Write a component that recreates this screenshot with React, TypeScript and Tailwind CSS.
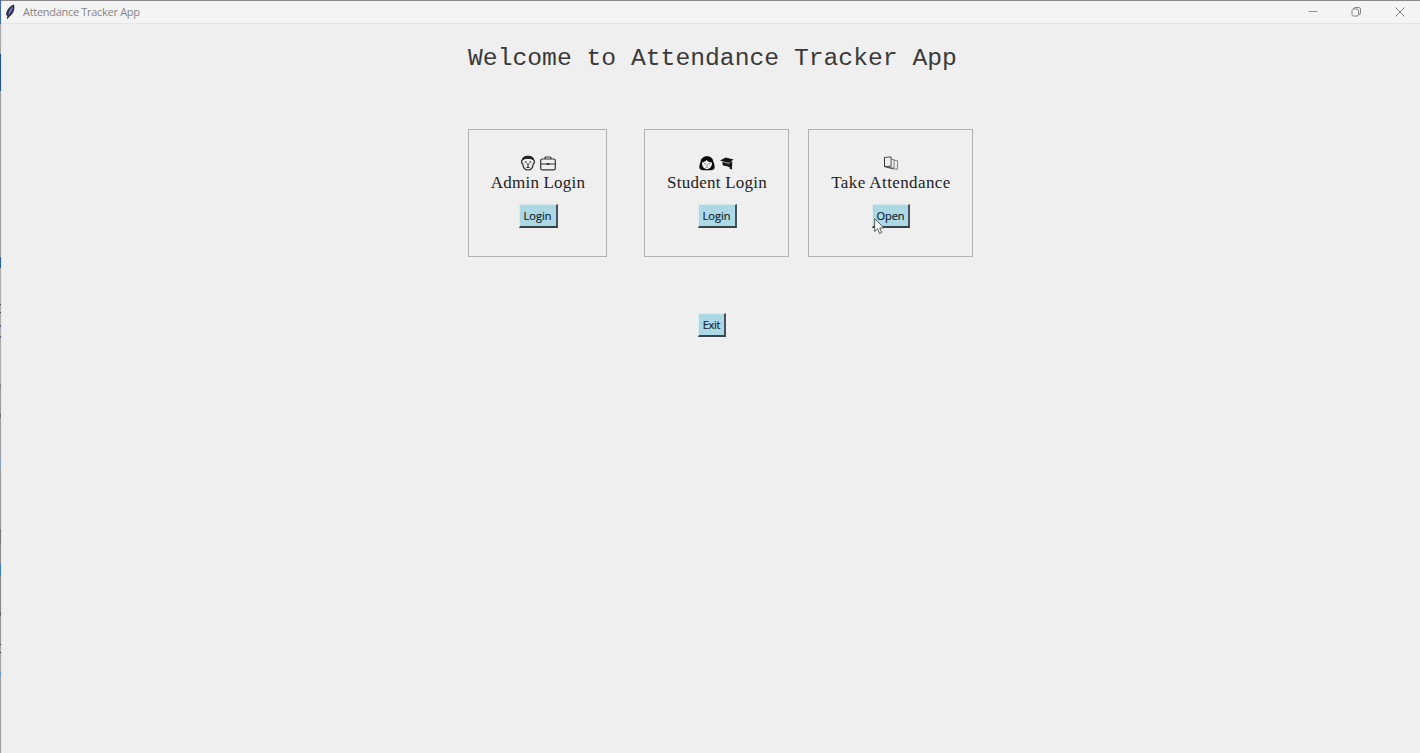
import type { ReactNode } from "react";

const edge = [
  "h-[24px] bg-[#3f66b0]",
  "h-[30px] bg-[#aaaaac]",
  "h-[37px] bg-[#1f5596]",
  "h-[166px] bg-[#a3a3a5]",
  "h-[11px] bg-[#2161a5]",
  "h-[36px] bg-[#adadad]",
  "h-px bg-[#444444]",
  "h-[7px] bg-[#adadad]",
  "h-px bg-[#444444]",
  "h-[12px] bg-[#adadad]",
  "h-[2px] bg-[#5a6478]",
  "h-[9px] bg-[#adadad]",
  "h-[2px] bg-[#5a6478]",
  "h-[46px] bg-[#adadad]",
  "h-[5px] bg-[#888888]",
  "h-[25px] bg-[#9f9fa1]",
  "h-[4px] bg-[#777777]",
  "h-[38px] bg-[#9fa1a5]",
  "h-[13px] bg-[#8ba1b5]",
  "h-[60px] bg-[#9a9a9b]",
  "h-[15px] bg-[#777777]",
  "h-[20px] bg-[#8d8d8e]",
  "h-[12px] bg-[#3b82c9]",
  "h-[36px] bg-[#8b8b8b]",
  "h-[4px] bg-[#666666]",
  "h-[28px] bg-[#999999]",
  "h-px bg-[#444444]",
  "h-[7px] bg-[#a5a5a5]",
  "h-px bg-[#333333]",
  "h-[19px] bg-[#a5a5a5]",
  "h-[4px] bg-[#5b9bc8]",
  "flex-1 bg-[#a0a0a2]",
];

function TkButton({ children, className }: { children: ReactNode; className: string }) {
  return (
    <button
      className={`flex h-[24px] items-center justify-center border-r-2 border-b-2 border-t border-l border-t-[#dcebf0] border-l-[#dcebf0] border-r-[#46535a] border-b-[#36434a] bg-[#add8e6] pb-px font-['Open_Sans','Noto_Sans',sans-serif] text-[11px] leading-none text-[#14242c] [-webkit-text-stroke:0.2px_#14242c] ${className}`}
    >
      {children}
    </button>
  );
}

function Card({ icons, label, children, className, labelClass }: { icons: ReactNode; label: string; children: ReactNode; className: string; labelClass: string }) {
  return (
    <section className={`flex h-[128px] flex-col items-center border border-[#b2b2b2] pt-[25px] ${className}`}>
      <div className="flex h-4 gap-1">{icons}</div>
      <h2 className={`mt-[2px] h-5 whitespace-nowrap pl-px font-['Liberation_Serif',serif] text-[17px] leading-5 text-[#222222] ${labelClass}`}>{label}</h2>
      <div className="mt-[11px] flex pl-px">{children}</div>
    </section>
  );
}

function ManIcon() {
  return (
    <svg className="size-4" viewBox="0 0 16 16" fill="none" stroke="#2a2a2a">
      <path d="M2.300 5C2.300 2.500 5 1.800 8 1.800s5.700.7 5.700 3.200c1.200 1.200 1 3.200-.4 3.900C12.900 12.500 10.700 15 8 15s-4.900-2.500-5.300-6.100C1.300 8.200 1.100 6.200 2.300 5Z" strokeWidth="1.200" />
      <path d="M2.500 5c0-2.700 2.500-3.800 5.500-3.800S13.500 2.300 13.500 5L12 4C10 3.200 6 3.200 4 4Z" fill="#1b1b1b" />
      <path d="M4.700 7h1.800M9.500 7h1.800M6.500 8.300 8 9.500l1.500-1.200M8 9.500V12M6.500 12.500h3" />
    </svg>
  );
}

function BriefcaseIcon() {
  return (
    <svg className="size-4" viewBox="0 0 16 16" fill="none" stroke="#333333" strokeWidth="1.200">
      <rect x=".7" y="4" width="14.600" height="10.800" rx="1.600" />
      <path d="M5 4V3q0-1 1-1h4q1 0 1 1v1M.7 9h14.600" />
      <path d="M6.500 9h3" strokeWidth="1.800" />
    </svg>
  );
}

function WomanIcon() {
  return (
    <svg className="size-4" viewBox="0 0 16 16">
      <path d="M8 1.200c4 0 6.200 2.600 6.500 5.800.8 2 1.300 4.100 1.100 5.600-.2 1.900-1.500 2.600-3.600 2.600H4C1.900 15.200.6 14.500.4 12.600.2 11.100.7 9 1.500 7 1.800 3.800 4 1.200 8 1.200Z" fill="#0b0b0b" />
      <path d="M3 7.500c1.900-.3 3.600-1.200 4.400-2.500C8.800 6.400 10.600 7.300 13 7.500c.2 3.900-2 6.500-5 6.500S2.800 11.400 3 7.500Z" fill="#eeeeee" />
      <path d="M4.800 8.600h1.700M9.500 8.600h1.700M6.500 9.300l1.500 1.200 1.500-1.200M6.700 12.200h2.600" fill="none" stroke="#777777" strokeWidth=".8" />
    </svg>
  );
}

function CapIcon() {
  return (
    <svg className="size-4" viewBox="0 0 16 16" fill="#151515">
      <path d="M1 5.500 6.800 2.400 14.600 4.600 9.600 8Z" />
      <path d="m3.300 6.800 6.300 2 3.600-2.500v4.500l-2.700 1.700C8 11 6 10.700 3.900 10.500Z" />
      <path d="m7.500 5 4.700 2.200v6" fill="none" stroke="#151515" strokeWidth="1.200" />
      <path d="m11.200 11 1.800.3v3.200l-2.300-.7Z" />
    </svg>
  );
}

function PagesIcon() {
  return (
    <svg className="size-4" viewBox="0 0 16 16" fill="#efefef" stroke="#777777" strokeWidth=".9">
      <path d="m9 5 5.500.7v8.500L9 13.600Z" />
      <path d="m5.500 4 5.600.6v8.700L5.500 12Z" />
      <path d="m1.500 2.500 6.600-.6v9.300l-6.600.3Z" stroke="#3f3f3f" />
      <path d="M1.500 2.500v9.200l8.300 2" fill="none" stroke="#333333" />
    </svg>
  );
}

export default function App() {
  return (
    <div className="flex h-[753px] w-[1420px] overflow-hidden bg-[#efefef]">
      <div className="flex w-px shrink-0 flex-col">
        {edge.map((segment, index) => (
          <div key={index} className={segment} />
        ))}
      </div>
      <div className="flex flex-1 flex-col">
        <header className="flex h-[23px] shrink-0 items-center justify-between border-t border-[#8b898b] bg-[#f4f4f5]">
          <div className="flex items-center">
            <svg className="ml-[3px] h-[16px] w-[12px]" viewBox="0 0 12 16">
              <path d="M10 .5c.8 3 .4 6.500-1.800 9.500L5 13.200 3.600 15l-.8-.4.6-2.400L2 10.500C2.500 6 6 1.500 10 .5Z" fill="#303047" />
              <path d="M8.600 2.300C6.300 4.600 4.600 8 4.200 11.200l1.500-1.500C7.700 7.500 8.800 5 8.600 2.300Z" fill="#777fc9" />
            </svg>
            <h1 className="ml-[7px] whitespace-nowrap font-['Open_Sans','Noto_Sans',sans-serif] text-[11px] leading-5 tracking-[-0.3px] text-[#858585]">Attendance Tracker App</h1>
          </div>
          <div className="mr-[14px] flex items-center gap-[32px]">
            <svg className="-mr-[1px] size-3" viewBox="0 0 12 12" fill="none" stroke="#929292">
              <path d="M1.500 5.500h9" />
            </svg>
            <svg className="size-3" viewBox="0 0 12 12" fill="none" stroke="#858585">
              <rect x="2" y="3" width="6.500" height="7" rx="1.500" />
              <path d="M4 3V2.500q0-1 1-1h3.500q2 0 2 1.500v4q0 1.500-1.500 1.500" />
            </svg>
            <svg className="size-3" viewBox="0 0 12 12" fill="none" stroke="#858585">
              <path d="m1.500 1.500 9 9M10.500 1.500l-9 9" />
            </svg>
          </div>
        </header>
        <main className="flex flex-1 flex-col border-t border-l border-[#e7e5e8] pl-[466px]">
          <p className="mt-[18px] h-8 whitespace-nowrap font-['Liberation_Mono',monospace] text-[24.700px] leading-8 text-[#3a3a3a]">Welcome to Attendance Tracker App</p>
          <div className="mt-[55px] flex">
            <Card className="w-[139px]" label="Admin Login" labelClass="tracking-[0.2px]" icons={<><ManIcon /><BriefcaseIcon /></>}>
              <TkButton className="w-[39px]">Login</TkButton>
            </Card>
            <Card className="ml-[37px] w-[145px]" label="Student Login" labelClass="tracking-[0.25px]" icons={<><WomanIcon /><CapIcon /></>}>
              <TkButton className="w-[39px]">Login</TkButton>
            </Card>
            <Card className="ml-[19px] w-[165px]" label="Take Attendance" labelClass="tracking-[0.4px]" icons={<PagesIcon />}>
              <div className="relative">
                <TkButton className="w-[38px]">Open</TkButton>
                <svg className="absolute left-[2px] top-[14px] h-[17px] w-[11px]" viewBox="0 0 11 17">
                  <path d="M.7.8v12.700l2.900-2.800 2 4.800 2.100-.9-2-4.700h4.200Z" fill="#ffffff" stroke="#333333" strokeWidth=".8" />
                </svg>
              </div>
            </Card>
          </div>
          <div className="mt-[56px] flex pl-[230px]">
            <TkButton className="w-[28px] tracking-[-0.3px]">Exit</TkButton>
          </div>
        </main>
      </div>
    </div>
  );
}
